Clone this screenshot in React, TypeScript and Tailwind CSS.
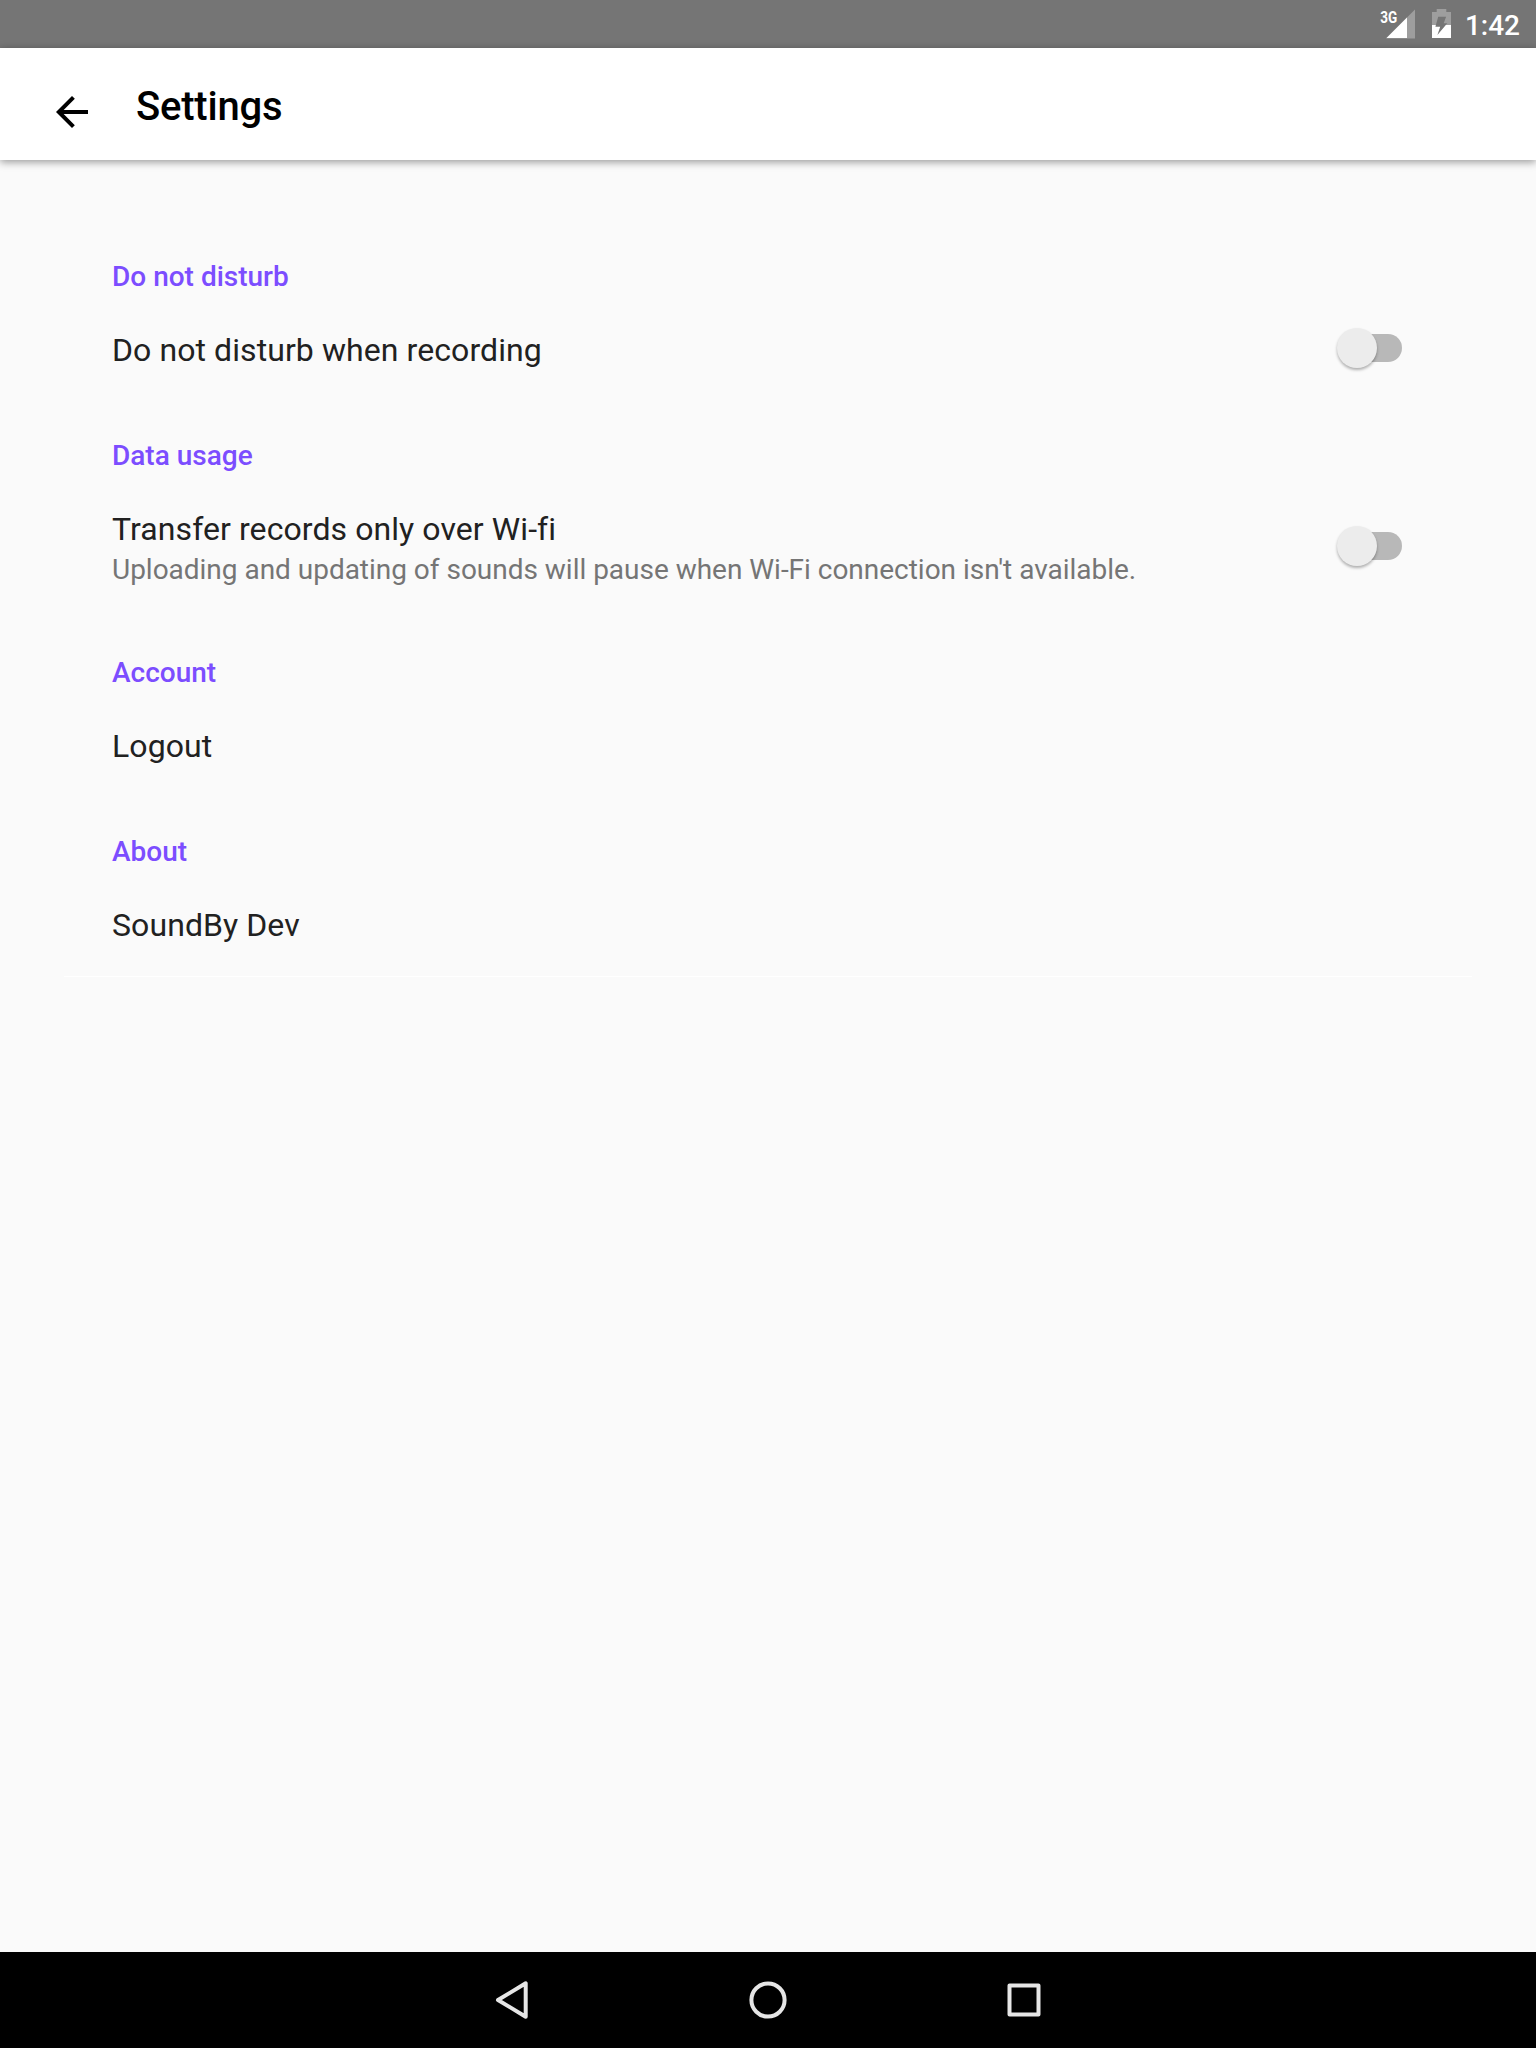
import type { ReactNode } from 'react';

function StatusBar() {
  return (
    <div className="flex h-12 shrink-0 items-start justify-end bg-[#757575] text-white">
      <svg className="h-12 w-[46px]" viewBox="0 0 46 48">
        <path d="M37 9.5V38.5H8z" fill="#9e9e9e" />
        <path d="M29 17.5V38H8.5z" fill="#fff" />
        <text x="2.3" y="22.8" fontFamily="Roboto" fontSize="16.5" fontWeight="700" fill="#fff" textLength="17" lengthAdjust="spacingAndGlyphs">
          3G
        </text>
      </svg>
      <svg className="ml-2 h-12 w-[20px]" viewBox="0 0 20 48">
        <path d="M0 12h4.700V9h9.600v3H19v13H0z" fill="#9e9e9e" />
        <path d="M0 25h19v13H0z" fill="#fff" />
        <path d="M6.200 16.700h7.900l-2.400 6.600h3.600L5.400 35l2.800-8.300H3.400z" fill="#757575" />
      </svg>
      <span className="mt-[10px] mr-4 ml-[13px] text-[28px] leading-8 font-medium">1:42</span>
    </div>
  );
}

function Toolbar() {
  return (
    <header className="z-10 flex h-28 shrink-0 items-start bg-white pl-12 shadow-[0_2px_8px_rgba(0,0,0,0.4)]">
      <svg className="mt-10 size-12" viewBox="0 0 24 24">
        <path d="M20 11H7.830l5.590-5.590L12 4l-8 8 8 8 1.410-1.410L7.830 13H20v-2z" />
      </svg>
      <h1 className="mt-[35px] ml-10 text-[40px] leading-[48px] font-medium tracking-[-0.2px] text-black">Settings</h1>
    </header>
  );
}

function Switch() {
  return (
    <span className="relative -mt-1 flex h-10 w-[65px] items-center">
      <span className="ml-[5px] h-7 w-[60px] rounded-full bg-[#b8b8b8]" />
      <span className="absolute top-0 left-0 size-10 rounded-full bg-[#ececec] shadow-[0_2px_3px_rgba(0,0,0,0.3)]" />
    </span>
  );
}

function Category({ title, children }: { title: string; children: ReactNode }) {
  return (
    <section>
      <h2 className="text-[28px] leading-8 font-medium text-[#7c4dff]">{title}</h2>
      <div className="mt-[37px] flex items-center justify-between">{children}</div>
    </section>
  );
}

function Preference({ title, summary }: { title: string; summary?: string }) {
  return (
    <div>
      <p className="text-[32px] leading-10 tracking-[0.08px] text-[#212121]">{title}</p>
      {summary && <p className="mt-1 text-[28px] leading-[34px] tracking-[-0.02px] text-[#757575]">{summary}</p>}
    </div>
  );
}

function NavigationBar() {
  return (
    <nav className="flex h-24 shrink-0 items-center justify-center gap-[208px] bg-black">
      <svg className="size-12" viewBox="0 0 48 48" fill="none" stroke="#e6e6e6" strokeWidth="4" strokeLinejoin="round">
        <path d="M37.700 7.300V40.700L10 24z" />
      </svg>
      <svg className="size-12" viewBox="0 0 48 48" fill="none" stroke="#e6e6e6" strokeWidth="4">
        <circle cx="24" cy="24" r="16.600" />
      </svg>
      <svg className="size-12" viewBox="0 0 48 48" fill="none" stroke="#e6e6e6" strokeWidth="4" strokeLinejoin="round">
        <path d="M9.500 9.500h29v29h-29z" />
      </svg>
    </nav>
  );
}

export default function App() {
  return (
    <div className="flex h-[2048px] w-[1536px] flex-col bg-[#fafafa] font-[Roboto,sans-serif]">
      <StatusBar />
      <Toolbar />
      <main className="flex-1 px-16 pt-[101px]">
        <div className="flex flex-col gap-[70px] border-b border-white pr-[70px] pb-[31px] pl-12">
          <Category title="Do not disturb">
            <Preference title="Do not disturb when recording" />
            <Switch />
          </Category>
          <Category title="Data usage">
            <Preference title="Transfer records only over Wi-fi" summary="Uploading and updating of sounds will pause when Wi-Fi connection isn't available." />
            <Switch />
          </Category>
          <Category title="Account">
            <Preference title="Logout" />
          </Category>
          <Category title="About">
            <Preference title="SoundBy Dev" />
          </Category>
        </div>
      </main>
      <NavigationBar />
    </div>
  );
}
